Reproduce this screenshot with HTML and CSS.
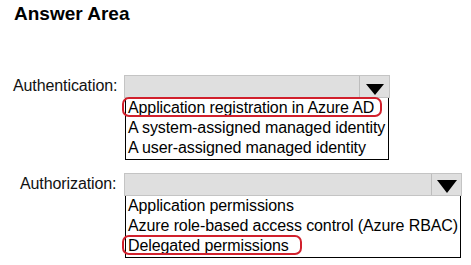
FILE: index.html
```
<!DOCTYPE html>
<html lang="en">
<head>
    <meta charset="UTF-8">
    <meta name="viewport" content="width=device-width, initial-scale=1.0">
    <title>Answer Area</title>
    <link rel="stylesheet" href="styles.css">
</head>
<body>

<h1 class="title">Answer Area</h1>

<div class="field field-auth">
    <div class="field-label">Authentication:</div>
    <div class="picker">
        <div class="picker-box"><span class="picker-arrow"></span></div>
        <ul class="options">
            <li><span class="circled">Application registration in Azure AD</span></li>
            <li>A system-assigned managed identity</li>
            <li>A user-assigned managed identity</li>
        </ul>
    </div>
</div>

<div class="field field-authz">
    <div class="field-label">Authorization:</div>
    <div class="picker">
        <div class="picker-box"><span class="picker-arrow"></span></div>
        <ul class="options">
            <li>Application permissions</li>
            <li>Azure role-based access control (Azure RBAC)</li>
            <li><span class="circled circled-wide">Delegated permissions</span></li>
        </ul>
    </div>
</div>

</body>
</html>
```

FILE: styles.css
```
body {
    font-family: "Liberation Sans", Arial, sans-serif;
    color: #000;
    background-color: #fff;
    margin: 0;
    padding: 0;
}
.title {
    font-size: 19px;
    line-height: 22px;
    font-weight: bold;
    margin: 0;
    padding: 3px 0 0 14px;
}

/* Question rows */
.field {
    display: grid;
    grid-template-columns: 124px auto;
    font-size: 16px;
}
.field-auth {
    margin-top: 50px;
}
.field-authz {
    margin-top: 13px;
}
.field-label {
    line-height: 21px;
    padding-left: 13px;
    color: #111;
    letter-spacing: -0.1px;
}
.field-authz .field-label {
    padding-left: 20px;
}
.field-auth .picker {
    width: 266px;
}
.field-authz .picker {
    width: 338px;
}

/* Drop-down box */
.picker-box {
    height: 21px;
    border: 1px solid #c4c4c4;
    background-color: #dfdfdf;
    display: flex;
    justify-content: flex-end;
}
.picker-arrow {
    width: 30px;
    border-left: 1px solid #bdbdbd;
    display: flex;
    justify-content: center;
    padding-top: 8px;
    box-sizing: border-box;
}
.picker-arrow::before {
    content: "";
    width: 0;
    height: 0;
    border-left: 9px solid transparent;
    border-right: 9px solid transparent;
    border-top: 11px solid #000;
}
.field-authz .picker-arrow {
    padding-top: 6px;
}
.field-authz .picker-arrow::before {
    border-left-width: 10px;
    border-right-width: 10px;
    border-top-width: 13px;
}

/* Option list */
.options {
    list-style: none;
    margin: 0 1px;
    padding: 0 0 1px 2px;
    border: 1px solid #000;
    border-top: none;
    line-height: 20px;
    letter-spacing: -0.1px;
}
.options li {
    white-space: nowrap;
}
.circled {
    position: relative;
}
.circled::after {
    content: "";
    position: absolute;
    left: -6px;
    right: -8px;
    top: -2px;
    bottom: -1px;
    border: 2px solid #d1202c;
    border-radius: 7px;
}
.circled-wide::after {
    right: -13px;
}
```
